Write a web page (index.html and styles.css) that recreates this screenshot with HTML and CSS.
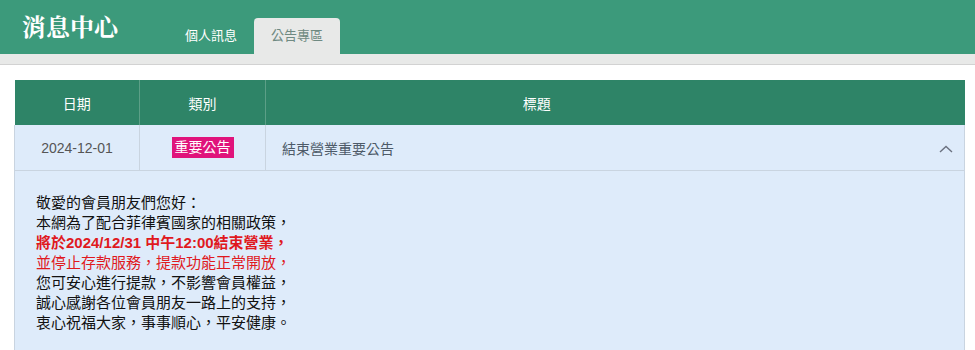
FILE: index.html
```html
<!DOCTYPE html>
<html lang="zh-Hant">
<head>
    <meta charset="UTF-8">
    <meta name="viewport" content="width=device-width, initial-scale=1.0">
    <title>消息中心</title>
    <link rel="stylesheet" href="styles.css">
</head>
<body>
    <!-- Top bar with tabs -->
    <header class="topbar">
        <h1 class="topbar-title">消息中心</h1>
        <nav class="tabs">
            <a class="tab" href="#">個人訊息</a>
            <a class="tab tab-active" href="#">公告專區</a>
        </nav>
    </header>
    <div class="subbar"></div>

    <!-- Notice list -->
    <main class="board">
        <table class="notice-table">
            <colgroup>
                <col class="col-date">
                <col class="col-type">
                <col class="col-title">
                <col class="col-toggle">
            </colgroup>
            <thead>
                <tr>
                    <th>日期</th>
                    <th>類別</th>
                    <th class="th-title">標題</th>
                    <th class="th-toggle"></th>
                </tr>
            </thead>
            <tbody>
                <tr class="notice-row">
                    <td class="cell-date">2024-12-01</td>
                    <td class="cell-type"><span class="badge">重要公告</span></td>
                    <td class="cell-title">結束營業重要公告</td>
                    <td class="cell-toggle">
                        <svg class="chevron" width="14" height="8" viewBox="0 0 14 8">
                            <path d="M1 7 L7 1.5 L13 7" fill="none" stroke="#6b7280" stroke-width="1.4"/>
                        </svg>
                    </td>
                </tr>
                <tr class="notice-detail">
                    <td colspan="4">
                        <div class="detail-text">
                            <p>敬愛的會員朋友們您好：</p>
                            <p>本網為了配合菲律賓國家的相關政策，</p>
                            <p class="warn strong">將於2024/12/31 中午12:00結束營業，</p>
                            <p class="warn">並停止存款服務，提款功能正常開放，</p>
                            <p>您可安心進行提款，不影響會員權益，</p>
                            <p>誠心感謝各位會員朋友一路上的支持，</p>
                            <p>衷心祝福大家，事事順心，平安健康。</p>
                        </div>
                    </td>
                </tr>
            </tbody>
        </table>
    </main>
</body>
</html>
```

FILE: styles.css
```css
body {
    margin: 0;
    font-family: "Liberation Sans", "Noto Sans CJK TC", sans-serif;
    background-color: #fff;
    color: #222;
}

/* top bar */
.topbar {
    display: flex;
    align-items: flex-end;
    height: 54px;
    padding-left: 22px;
    background-color: #3c9a7b;
}

.topbar-title {
    align-self: center;
    margin: 0 50px 4px 0;
    font-family: "Noto Serif CJK TC", "Noto Sans CJK TC", serif;
    font-size: 24px;
    font-weight: 700;
    color: #fff;
}

.tabs {
    display: flex;
}

.tab {
    display: block;
    height: 36px;
    line-height: 36px;
    padding: 0 17px;
    font-size: 13px;
    color: #fff;
    text-decoration: none;
    border-radius: 4px 4px 0 0;
}

.tab-active {
    background-color: #e8e9e8;
    color: #6f8a82;
}

.subbar {
    height: 10px;
    background-color: #e8e9e8;
    border-bottom: 1px solid #d2d2d2;
}

/* table */
.board {
    padding: 15px 11px 0 14px;
}

.notice-table {
    width: 950px;
    border-collapse: collapse;
    table-layout: fixed;
}

.col-date { width: 125px; }
.col-type { width: 126px; }
.col-title { width: 542px; }
.col-toggle { width: 157px; }

.notice-table th {
    height: 45px;
    padding: 0;
    background-color: #2e8467;
    color: #fff;
    font-size: 14px;
    font-weight: normal;
    border-left: 1px solid #5c9f87;
}

.notice-table th:first-child,
.notice-table th.th-toggle {
    border-left: none;
}

.notice-row td {
    height: 45px;
    padding: 0;
    background-color: #deebfa;
    font-size: 14px;
    color: #555;
    border-bottom: 1px solid #c9d4e0;
}

.notice-row td:first-child {
    border-left: 1px solid #c9d4e0;
}

.cell-date,
.cell-type {
    text-align: center;
    border-right: 1px solid #c9d4e0;
}

.notice-row .cell-title {
    padding-left: 16px;
    color: #4d5a68;
}

.notice-row .cell-toggle {
    text-align: right;
    padding-right: 11px;
    border-right: 1px solid #c9d4e0;
}

.chevron {
    display: inline-block;
    vertical-align: middle;
}

.badge {
    display: inline-block;
    padding: 0 3px;
    line-height: 21px;
    background-color: #e0137b;
    color: #fff;
    font-size: 14px;
}

/* expanded notice */
.notice-detail td {
    padding: 0;
    background-color: #deebfa;
    border-left: 1px solid #c9d4e0;
    border-right: 1px solid #c9d4e0;
}

.detail-text {
    padding: 22px 21px 30px;
    font-size: 15px;
    line-height: 20px;
    color: #111;
}

.detail-text p {
    margin: 0;
}

.warn {
    color: #e0191e;
}

.strong {
    font-weight: 700;
}
```
